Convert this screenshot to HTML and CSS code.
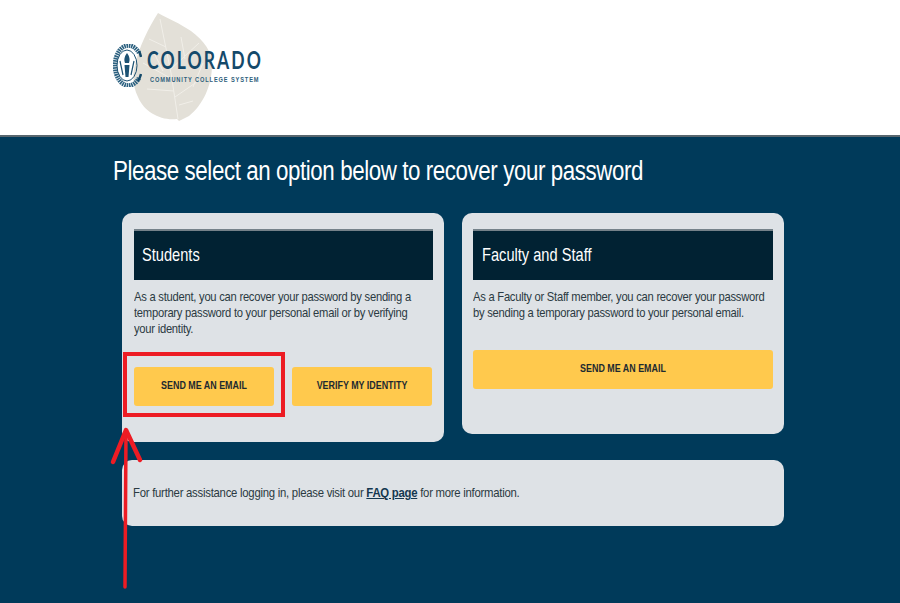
FILE: index.html
```html
<!DOCTYPE html>
<html lang="en">
<head>
    <meta charset="UTF-8">
    <meta name="viewport" content="width=device-width, initial-scale=1.0">
    <title>Password Recovery</title>
    <link rel="stylesheet" href="styles.css">
</head>
<body>
    <!-- Logo header -->
    <header class="site-header">
        <div class="logo">
            <svg class="logo-leaf" viewBox="0 0 80 110" aria-hidden="true">
                <path d="M25 0 C36 6 46 10 58 18 C71 28 79 38 79 52 C79 72 70 92 56 103 L46 108 L44 106 C28 108 11 99 5 84 C0 74 -1 62 2 52 C6 34 16 14 25 0 Z" fill="#e3e0d8"/>
                <path d="M45 106 L38 60 L27 6 M39 66 L10 50 M38 56 L66 30 M42 84 L68 66 M33 34 L16 26 M41 78 L14 76 M46 92 L60 88 M30 58 L20 38 M52 46 L48 24 M60 74 L70 50" fill="none" stroke="#f1efe9" stroke-width="1"/>
            </svg>
            <svg class="logo-seal" viewBox="0 0 29 43" preserveAspectRatio="none" aria-hidden="true">
                <path d="M26 9 A13.5 20 0 1 0 26 34" fill="none" stroke="#2c6180" stroke-width="4.5" stroke-dasharray="1.6 0.7"/>
                <ellipse cx="14" cy="21.5" rx="10" ry="15.5" fill="none" stroke="#1d5273" stroke-width="1"/>
                <path d="M14 9 C17 13 17 16 16 19 L12 19 C11 16 11 13 14 9 Z M11.5 21 H16.5 L15.5 33 H12.5 Z" fill="#1d5273"/>
                <path d="M7 17 L10 31 M21 17 L18 31" fill="none" stroke="#1d5273" stroke-width="1.2"/>
                <path d="M26 7 A14 21 0 0 1 28 13 M28 30 A14 21 0 0 1 25 37" fill="none" stroke="#14496a" stroke-width="2.5"/>
            </svg>
            <div class="logo-text">
                <div class="logo-name">COLORADO</div>
                <div class="logo-sub">COMMUNITY COLLEGE SYSTEM</div>
            </div>
        </div>
    </header>

    <div class="content">
        <h1>Please select an option below to recover your password</h1>

        <div class="cards">
            <!-- Students -->
            <div class="card card-tall">
                <h2 class="card-title"><span>Students</span></h2>
                <p class="card-text">As a student, you can recover your password by sending a temporary password to your personal email or by verifying your identity.</p>
                <div class="btn-row btn-row-low">
                    <a class="btn" href="#"><span>SEND ME AN EMAIL</span></a>
                    <a class="btn" href="#"><span>VERIFY MY IDENTITY</span></a>
                </div>
            </div>

            <!-- Faculty and Staff -->
            <div class="card card-short">
                <h2 class="card-title"><span>Faculty and Staff</span></h2>
                <p class="card-text">As a Faculty or Staff member, you can recover your password by sending a temporary password to your personal email.</p>
                <div class="btn-row">
                    <a class="btn" href="#"><span>SEND ME AN EMAIL</span></a>
                </div>
            </div>
        </div>

        <div class="help-box">
            <p>For further assistance logging in, please visit our <a href="#">FAQ page</a> for more information.</p>
        </div>
    </div>

    <!-- Red annotation drawn over the page -->
    <div class="mark-box"></div>
    <svg class="mark-arrow" viewBox="0 0 40 170" aria-hidden="true">
        <path d="M15 162 L16 6" fill="none" stroke="#ed1c24" stroke-width="3.5" stroke-linecap="round"/>
        <path d="M3 37 L16 5 L30 35" fill="none" stroke="#ed1c24" stroke-width="4.5" stroke-linecap="round" stroke-linejoin="round"/>
    </svg>
</body>
</html>
```

FILE: styles.css
```css
html, body {
    height: 100%;
}
body {
    margin: 0;
    background-color: #003a5a;
    font-family: "Liberation Sans", Arial, sans-serif;
    overflow: hidden;
}
.site-header {
    height: 135px;
    background-color: #fff;
    border-bottom: 2px solid #58666e;
}
.logo {
    position: relative;
    width: 200px;
    height: 135px;
    margin-left: 90px;
}
.logo-leaf {
    position: absolute;
    left: 43px;
    top: 13px;
    width: 80px;
    height: 110px;
}
.logo-seal {
    position: absolute;
    left: 23px;
    top: 44px;
    width: 29px;
    height: 43px;
}
.logo-text {
    position: absolute;
    left: 57px;
    top: 45px;
}
.logo-name {
    font-family: Lato, sans-serif;
    font-size: 25px;
    font-weight: 700;
    letter-spacing: 3px;
    line-height: 28px;
    color: #14496a;
    transform: scaleX(0.7);
    transform-origin: left;
}
.logo-sub {
    margin-left: 3px;
    margin-top: 3px;
    font-size: 6.5px;
    font-weight: 700;
    letter-spacing: 1px;
    line-height: 8px;
    color: #2f5f7c;
    white-space: nowrap;
    transform: scaleX(0.87);
    transform-origin: left;
}
.content {
    width: 662px;
    margin-left: 122px;
}
h1 {
    margin: 18px 0 25px -9px;
    font-size: 27px;
    font-weight: 400;
    line-height: 33px;
    letter-spacing: -0.5px;
    color: #fff;
    white-space: nowrap;
    transform: scaleX(0.827);
    transform-origin: left;
}
.cards {
    display: flex;
    align-items: flex-start;
    gap: 18px;
}
.card {
    box-sizing: border-box;
    width: 322px;
    padding: 16px 11px 0 12px;
    background-color: #dee2e6;
    border-radius: 10px;
}
.card-tall {
    height: 229px;
}
.card-short {
    height: 221px;
    padding-left: 11px;
}
.card-title {
    margin: 0;
    height: 49px;
    padding-left: 8px;
    background-color: #012233;
    border-top: 2px solid #75828a;
    font-size: 19px;
    font-weight: 400;
    line-height: 48px;
    color: #fff;
}
.card-short .card-title {
    padding-left: 9px;
}
.card-title span {
    display: inline-block;
    transform: scaleX(0.77);
    transform-origin: left;
}
.card-text {
    width: 355px;
    margin: 9px 0 0;
    font-size: 13.5px;
    line-height: 16px;
    letter-spacing: -0.3px;
    color: #2b3a42;
    transform: scaleX(0.83);
    transform-origin: left;
}
.btn-row {
    display: flex;
    gap: 18px;
    margin-top: 29px;
}
.btn-row-low {
    margin-top: 30px;
    width: 298px;
}
.btn {
    flex: 1;
    height: 39px;
    background-color: #ffc94d;
    border-radius: 3px;
    font-size: 11px;
    font-weight: 700;
    line-height: 37px;
    text-align: center;
    color: #1d2a30;
    text-decoration: none;
}
.btn span {
    display: inline-block;
    transform: scaleX(0.81);
}
.help-box {
    box-sizing: border-box;
    height: 66px;
    margin-top: 18px;
    padding-left: 11px;
    background-color: #dee2e6;
    border-radius: 10px;
}
.help-box p {
    margin: 0;
    font-size: 13.5px;
    line-height: 66px;
    letter-spacing: -0.3px;
    color: #2b3a42;
    white-space: nowrap;
    transform: scaleX(0.84);
    transform-origin: left;
}
.help-box a {
    font-weight: 700;
    color: #14374f;
}
.mark-box {
    position: absolute;
    left: 123px;
    top: 352px;
    width: 154px;
    height: 57px;
    border: 4px solid #ed1c24;
}
.mark-arrow {
    position: absolute;
    left: 110px;
    top: 425px;
    width: 40px;
    height: 170px;
}
```
